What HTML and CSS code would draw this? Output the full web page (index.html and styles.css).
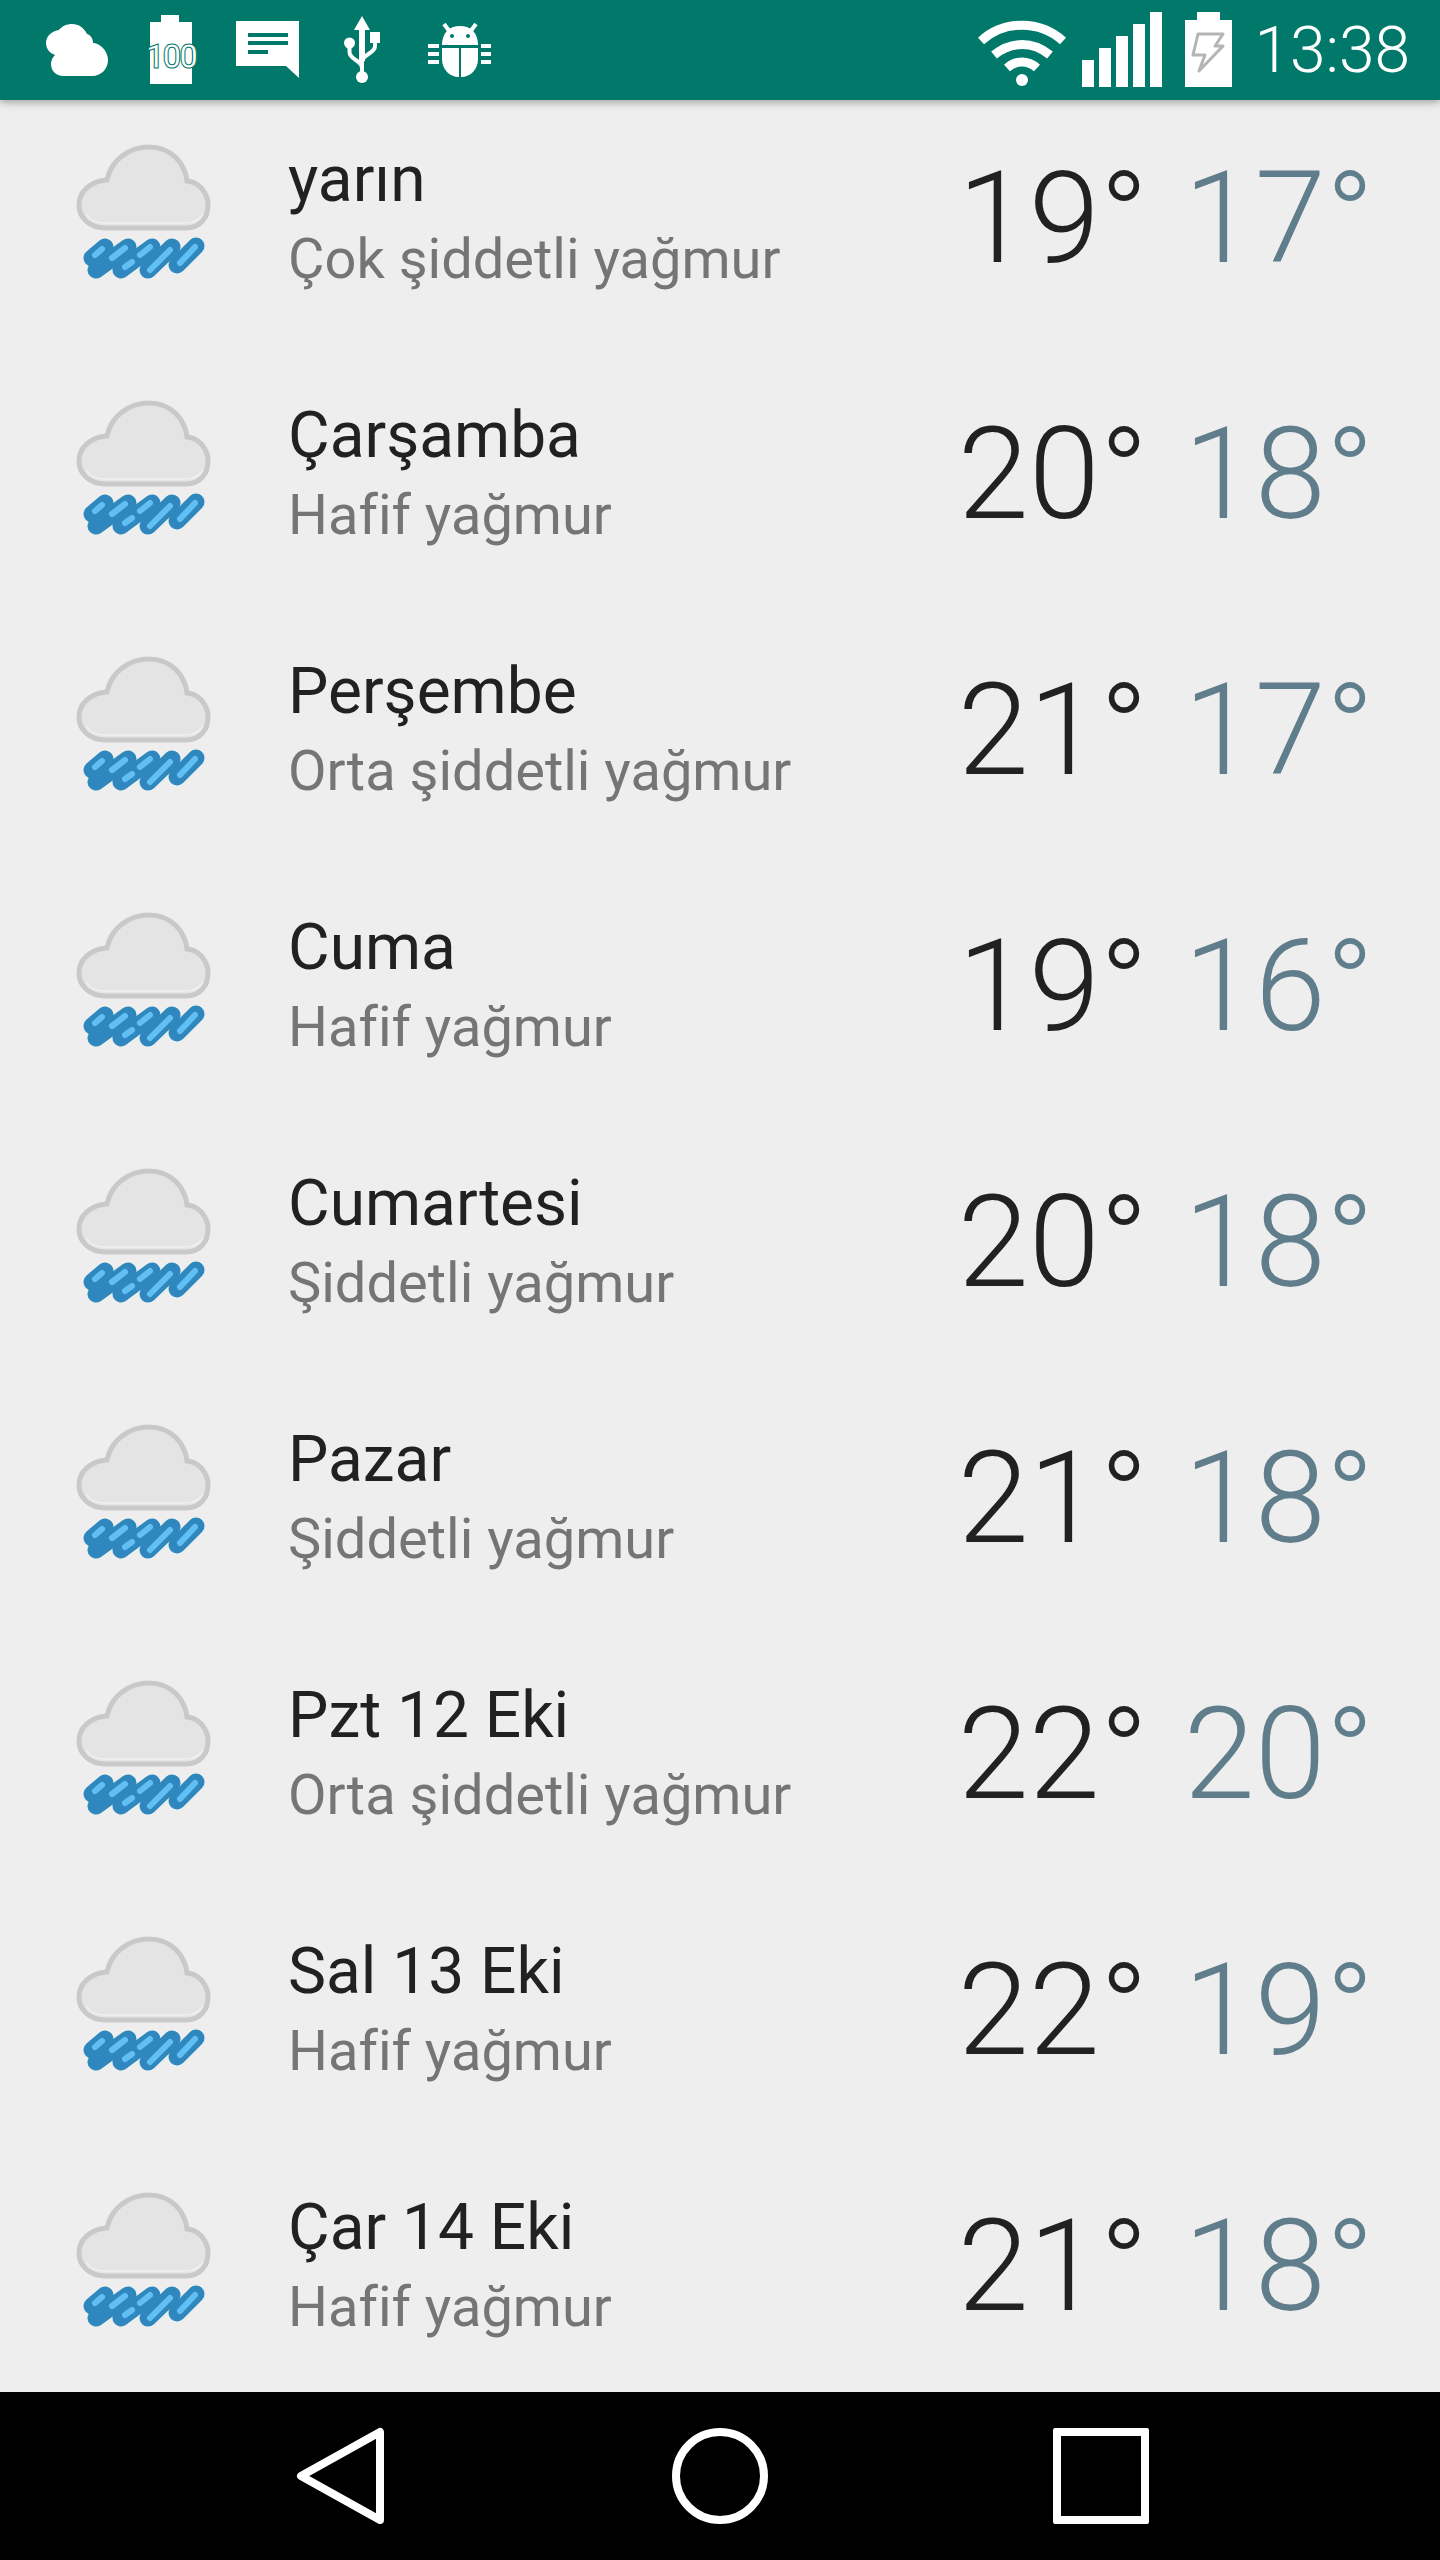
FILE: index.html
```html
<!DOCTYPE html>
<html lang="tr">
<head>
    <meta charset="UTF-8">
    <meta name="viewport" content="width=device-width, initial-scale=1.0">
    <title>Hava durumu</title>
    <link rel="stylesheet" href="styles.css">
</head>
<body>
    <svg class="defs" width="0" height="0">
        <symbol id="weather" viewBox="0 0 150 150">
            <path class="cloud" d="M31 85 C16 85 5 75 5 62 C5 48 17 38 33 37 C37 17 55 4 75 4 C97 4 111 20 113 38 C125 39 134 50 134 62 C134 75 126 85 112 85 Z"/>
            <path class="cloud-lip" d="M12 71 C17 79 24 80 31 80 L112 80 C120 80 125 77 129 71"/>
            <g class="rain-out">
                <path d="M18 115 L31 104"/><path d="M22 127 L54 104"/><path d="M47 127 L78 104"/><path d="M74 127 L98 104"/><path d="M103 122 L122 103"/>
            </g>
            <g class="rain-in">
                <path d="M21 112 L28 106"/><path d="M38 115 L51 105"/><path d="M51 124 L58 119"/>
                <path d="M66 112 L76 104"/><path d="M76 127 L96 107"/><path d="M106 120 L121 104"/>
            </g>
        </symbol>
    </svg>

    <div class="status-bar">
        <div class="status-left">
            <!-- cloud -->
            <svg width="62" height="52" viewBox="0 0 62 52"><path fill="#fff" d="M18 52 C9 52 5 46 5 40 C5 36 7 33 9 31 C3 29 0 24 0 19 C0 12 6 7 13 6 C16 2 21 0 26 0 C33 0 38 4 41 10 C45 11 47 15 47 19 C53 19 62 26 62 36 C62 45 55 52 46 52 Z"/></svg>
            <!-- battery 100 -->
            <svg class="bat-100" width="52" height="70" viewBox="0 0 52 70"><path fill="#fff" d="M4 7 H15 V0 H33 V7 H46 V69 H4 Z"/><text class="bat-text" x="25" y="53">100</text></svg>
            <!-- message -->
            <svg width="64" height="58" viewBox="0 0 64 58"><path fill="#fff" d="M0 0 H63 V57 L50 45 H0 Z"/><path fill="#00796b" d="M12 12 H52 V16 H12 Z M12 20 H52 V24 H12 Z M12 29 H32 V33 H12 Z"/></svg>
            <!-- usb -->
            <svg class="usb-icon" width="38" height="68" viewBox="0 0 38 68"><g fill="#fff"><path d="M18 0 L26 14 H21 V45 H15 V14 H10 Z"/><circle cx="18" cy="61" r="6"/><circle cx="5.500" cy="27" r="5.500"/><path d="M26 16 H36 V27 H26 Z"/></g><path class="usb-line" d="M5.500 30 V36 C5.500 44 18 44 18 52 M31 26 V30 C31 38 18 38 18 46 M18 44 V58"/></svg>
            <!-- bug -->
            <svg class="bug-icon" width="64" height="54" viewBox="0 0 64 54"><g fill="#fff"><path d="M14 22 C14 10 21 3 32 3 C43 3 50 10 50 22 Z"/><path d="M14 25 H31 V54 C21 54 14 46 14 36 Z"/><path d="M33 25 H50 V36 C50 46 43 54 33 54 Z"/><path d="M0 21 H11 V25 H0 Z M0 29 H11 V33 H0 Z M0 37 H11 V41 H0 Z M53 21 H63 V25 H53 Z M53 29 H63 V33 H53 Z M53 37 H63 V41 H53 Z"/></g><path class="bug-horn" d="M16 1 L22 9 M48 1 L42 9"/><circle cx="24" cy="13" r="2" fill="#00796b"/><circle cx="40" cy="13" r="2" fill="#00796b"/></svg>
        </div>
        <div class="status-right">
            <!-- wifi -->
            <svg class="wifi-icon" width="90" height="68" viewBox="0 0 90 68"><g class="wifi-arc"><path d="M3 22 C26 1 62 1 85 22"/><path d="M16 36 C33 22 55 22 72 36"/><path d="M29 49 C38 41 50 41 59 49"/></g><circle cx="44" cy="61" r="6" fill="#fff"/></svg>
            <!-- signal -->
            <svg class="signal-icon" width="81" height="76" viewBox="0 0 81 76"><path fill="#fff" d="M0 48 H12 V75 H0 Z M17 36 H29 V75 H17 Z M34 24 H46 V75 H34 Z M51 12 H63 V75 H51 Z M68 0 H80 V75 H68 Z"/></svg>
            <!-- charging battery -->
            <svg class="bat-charge" width="48" height="76" viewBox="0 0 48 76"><path fill="#fff" d="M0 8 H12 V0 H35 V8 H47 V75 H0 Z"/><path class="bolt" d="M13 22 H38 L30 34 H38 L14 59 L20 43 H8 Z"/></svg>
            <span class="clock">13:38</span>
        </div>
    </div>

    <div class="list">
        <div class="row">
            <svg class="icon"><use href="#weather"/></svg>
            <div class="day"><div class="name">yarın</div><div class="desc">Çok şiddetli yağmur</div></div>
            <div class="high">19°</div><div class="low">17°</div>
        </div>
        <div class="row">
            <svg class="icon"><use href="#weather"/></svg>
            <div class="day"><div class="name">Çarşamba</div><div class="desc">Hafif yağmur</div></div>
            <div class="high">20°</div><div class="low">18°</div>
        </div>
        <div class="row">
            <svg class="icon"><use href="#weather"/></svg>
            <div class="day"><div class="name">Perşembe</div><div class="desc">Orta şiddetli yağmur</div></div>
            <div class="high">21°</div><div class="low">17°</div>
        </div>
        <div class="row">
            <svg class="icon"><use href="#weather"/></svg>
            <div class="day"><div class="name">Cuma</div><div class="desc">Hafif yağmur</div></div>
            <div class="high">19°</div><div class="low">16°</div>
        </div>
        <div class="row">
            <svg class="icon"><use href="#weather"/></svg>
            <div class="day"><div class="name">Cumartesi</div><div class="desc">Şiddetli yağmur</div></div>
            <div class="high">20°</div><div class="low">18°</div>
        </div>
        <div class="row">
            <svg class="icon"><use href="#weather"/></svg>
            <div class="day"><div class="name">Pazar</div><div class="desc">Şiddetli yağmur</div></div>
            <div class="high">21°</div><div class="low">18°</div>
        </div>
        <div class="row">
            <svg class="icon"><use href="#weather"/></svg>
            <div class="day"><div class="name">Pzt 12 Eki</div><div class="desc">Orta şiddetli yağmur</div></div>
            <div class="high">22°</div><div class="low">20°</div>
        </div>
        <div class="row">
            <svg class="icon"><use href="#weather"/></svg>
            <div class="day"><div class="name">Sal 13 Eki</div><div class="desc">Hafif yağmur</div></div>
            <div class="high">22°</div><div class="low">19°</div>
        </div>
        <div class="row">
            <svg class="icon"><use href="#weather"/></svg>
            <div class="day"><div class="name">Çar 14 Eki</div><div class="desc">Hafif yağmur</div></div>
            <div class="high">21°</div><div class="low">18°</div>
        </div>
    </div>

    <div class="nav-bar">
        <svg width="88" height="98" viewBox="0 0 88 98"><path class="nav-shape" d="M84 5 V93 L5 49 Z"/></svg>
        <div class="nav-home"></div>
        <div class="nav-square"></div>
    </div>
</body>
</html>
```

FILE: styles.css
```css
html, body {
    margin: 0;
    padding: 0;
}

body {
    width: 1440px;
    height: 2560px;
    display: flex;
    flex-direction: column;
    overflow: hidden;
    background-color: #eeeeee;
    font-family: Roboto, "Liberation Sans", sans-serif;
}

.defs {
    position: absolute;
}

.status-bar {
    height: 100px;
    flex: none;
    display: flex;
    justify-content: space-between;
    align-items: center;
    padding: 0 30px 0 46px;
    background-color: #00796b;
    box-shadow: 0 2px 8px rgba(0, 0, 0, 0.35);
    position: relative;
    z-index: 1;
}

.status-left, .status-right {
    display: flex;
    align-items: center;
}

.status-left {
    gap: 38px;
}

.status-right {
    gap: 14px;
}

.usb-icon {
    margin-left: 6px;
}

.bug-icon {
    margin-left: 8px;
}

.wifi-icon {
    margin-top: 6px;
}

.signal-icon, .bat-charge {
    margin-right: 8px;
}

.bat-text {
    font-size: 33px;
    font-weight: 500;
    letter-spacing: -2px;
    text-anchor: middle;
    fill: #fff;
    stroke: #00796b;
    stroke-width: 1px;
}

.usb-line, .bug-horn {
    fill: none;
    stroke: #fff;
    stroke-width: 4px;
}

.wifi-arc path {
    fill: none;
    stroke: #fff;
    stroke-width: 9px;
}

.bolt {
    fill: none;
    stroke: #b5b5b5;
    stroke-width: 3px;
    stroke-linejoin: round;
}

.clock {
    color: #fff;
    font-size: 64px;
    font-weight: 300;
}

.list {
    flex: 1;
    min-height: 0;
    margin-top: -10px;
}

.row {
    height: 256px;
    display: flex;
    align-items: center;
}

.icon {
    width: 150px;
    height: 150px;
    flex: none;
    margin-left: 74px;
}

.cloud {
    fill: #e4e4e4;
    stroke: #c9c9c9;
    stroke-width: 5px;
}

.cloud-lip {
    fill: none;
    stroke: #f0f0f0;
    stroke-width: 1.500px;
}

.rain-out path {
    fill: none;
    stroke: #2f88bd;
    stroke-width: 17px;
    stroke-linecap: round;
}

.rain-in path {
    fill: none;
    stroke: #62bff3;
    stroke-width: 6px;
    stroke-linecap: round;
}

.day {
    flex: 1;
    margin-left: 64px;
    padding-top: 2px;
}

.name {
    font-size: 64px;
    line-height: 78px;
    margin-bottom: 1px;
    color: #212121;
}

.desc {
    font-size: 56px;
    line-height: 78px;
    color: #757575;
}

.high, .low {
    font-size: 128px;
    font-weight: 300;
    text-align: right;
    flex: none;
}

.high {
    width: 240px;
    color: #212121;
}

.low {
    width: 226px;
    color: #607d8b;
    margin-right: 66px;
}

.nav-bar {
    height: 168px;
    flex: none;
    display: flex;
    align-items: center;
    background-color: #000;
    padding-left: 296px;
}

.nav-shape {
    fill: none;
    stroke: #fff;
    stroke-width: 8px;
    stroke-linejoin: round;
}

.nav-home {
    width: 96px;
    height: 96px;
    box-sizing: border-box;
    border: 8px solid #fff;
    border-radius: 50%;
    margin-left: 288px;
}

.nav-square {
    width: 96px;
    height: 96px;
    box-sizing: border-box;
    border: 8px solid #fff;
    border-radius: 2px;
    margin-left: 285px;
}
```
